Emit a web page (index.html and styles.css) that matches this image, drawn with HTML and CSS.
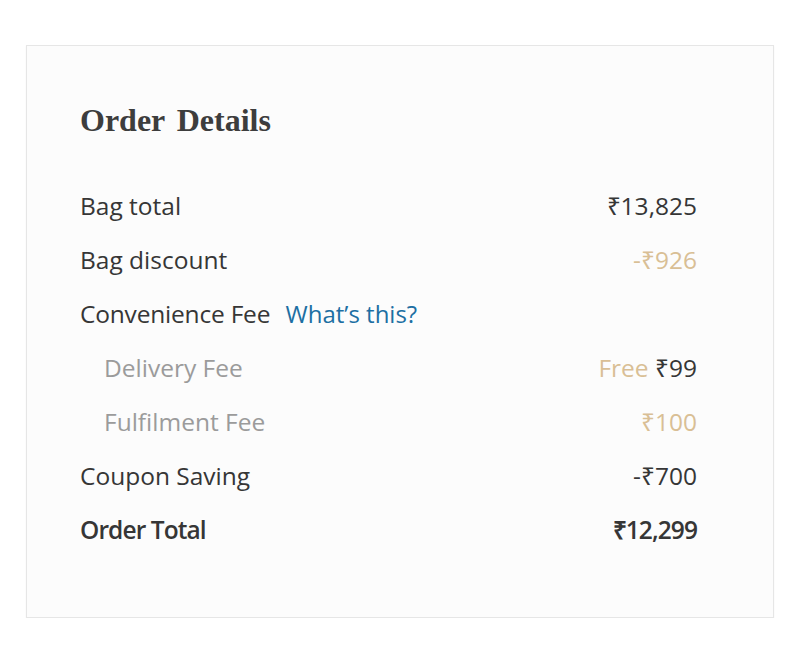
FILE: index.html
```html
<!DOCTYPE html>
<html>
<head>
<meta charset="utf-8">
<link rel="stylesheet" href="styles.css">
</head>
<body>
<div class="card">
  <h2 class="title">Order Details</h2>
  <div class="rows">
    <div class="row"><span class="label">Bag total</span><span class="val">₹13,825</span></div>
    <div class="row"><span class="label">Bag discount</span><span class="val tan">-₹926</span></div>
    <div class="row"><span class="label"><span class="conv">Convenience Fee</span> <a class="link">What’s this?</a></span></div>
    <div class="row sub"><span class="label">Delivery Fee</span><span class="val"><span class="tan">Free</span> ₹99</span></div>
    <div class="row sub"><span class="label">Fulfilment Fee</span><span class="val tan">₹100</span></div>
    <div class="row"><span class="label">Coupon Saving</span><span class="val">-₹700</span></div>
    <div class="row total"><span class="label">Order Total</span><span class="val">₹12,299</span></div>
  </div>
</div>
</body>
</html>
```

FILE: styles.css
```css
html, body { margin: 0; padding: 0; background: #ffffff; }
body { padding: 45px 0 0 26px; font-family: "Open Sans", sans-serif; }
.card {
  box-sizing: border-box;
  width: 748px;
  height: 573px;
  background: #fcfcfc;
  border: 1px solid #e6e6e6;
  box-shadow: 0 1px 2px rgba(0,0,0,0.04);
  padding: 52px 76px 0 53px;
}
.title {
  margin: 0 0 36px 0;
  font-family: "Liberation Serif", serif;
  font-weight: bold;
  font-size: 32px;
  letter-spacing: 0;
  word-spacing: 4px;
  color: #3d3d3d;
  line-height: 44px;
}
.rows { display: flex; flex-direction: column; }
.row {
  display: flex;
  justify-content: space-between;
  align-items: center;
  height: 54px;
  font-size: 24.5px;
  color: #363636;
}
.conv { letter-spacing: -0.2px; }
.row.sub { padding-left: 24px; }
.row.sub .label { color: #9b9b9b; }
.tan { color: #d9bf95; }
.link { color: #1d6fa3; margin-left: 9px; font-size: 24px; }
.total { font-weight: 600; letter-spacing: -0.9px; }
```
